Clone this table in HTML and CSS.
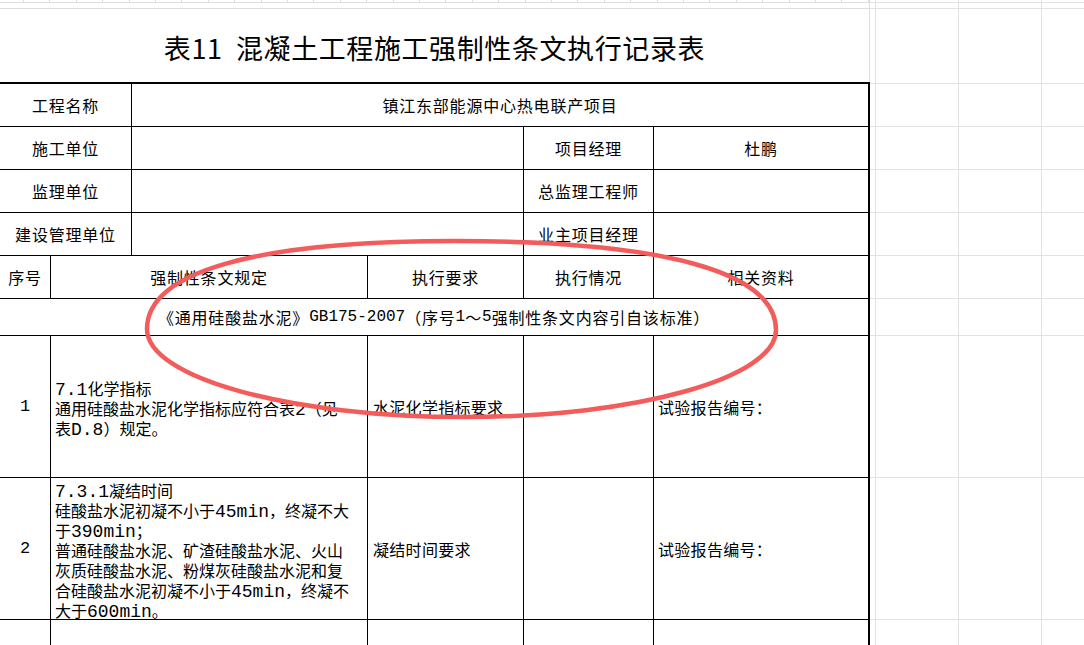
FILE: index.html
```html
<!DOCTYPE html>
<html lang="zh-CN">
<head>
<meta charset="utf-8">
<title>表11 混凝土工程施工强制性条文执行记录表</title>
<link rel="stylesheet" href="styles.css">
</head>
<body>
<div class="sheet">
  <div class="main">
    <div class="ruler"></div>
    <div class="spacer"></div>
    <h1 class="title">表11&nbsp; 混凝土工程施工强制性条文执行记录表</h1>
    <div class="form">
      <div class="c s2">工程名称</div>
      <div class="c s4">镇江东部能源中心热电联产项目</div>

      <div class="c s2">施工单位</div>
      <div class="c s2"></div>
      <div class="c">项目经理</div>
      <div class="c">杜鹏</div>

      <div class="c s2">监理单位</div>
      <div class="c s2"></div>
      <div class="c">总监理工程师</div>
      <div class="c"></div>

      <div class="c s2">建设管理单位</div>
      <div class="c s2"></div>
      <div class="c">业主项目经理</div>
      <div class="c"></div>

      <div class="c">序号</div>
      <div class="c s2">强制性条文规定</div>
      <div class="c">执行要求</div>
      <div class="c">执行情况</div>
      <div class="c">相关资料</div>

      <div class="c s6 std">《通用硅酸盐水泥》<span class="lat">GB175-2007</span>（序号<span class="lat">1</span>～<span class="lat">5</span>强制性条文内容引自该标准）</div>

      <div class="c"><span class="lat num">1</span></div>
      <div class="c s2 para"><div><span class="lat">7.1</span>化学指标<br>通用硅酸盐水泥化学指标应符合表<span class="lat">2</span>（见<br>表<span class="lat">D.8</span>）规定。</div></div>
      <div class="c req">水泥化学指标要求</div>
      <div class="c"></div>
      <div class="c doc">试验报告编号：</div>

      <div class="c"><span class="lat num">2</span></div>
      <div class="c s2 para"><div><span class="lat">7.3.1</span>凝结时间<br>硅酸盐水泥初凝不小于<span class="lat">45min</span>，终凝不大<br>于<span class="lat">390min</span>；<br>普通硅酸盐水泥、矿渣硅酸盐水泥、火山<br>灰质硅酸盐水泥、粉煤灰硅酸盐水泥和复<br>合硅酸盐水泥初凝不小于<span class="lat">45min</span>，终凝不<br>大于<span class="lat">600min</span>。</div></div>
      <div class="c req">凝结时间要求</div>
      <div class="c"></div>
      <div class="c doc">试验报告编号：</div>

      <div class="c"></div>
      <div class="c s2"></div>
      <div class="c"></div>
      <div class="c"></div>
      <div class="c"></div>
    </div>
  </div>
  <div class="side">
    <div></div><div></div><div></div><div></div>
    <div></div><div></div><div></div><div></div>
    <div></div><div></div><div></div><div></div>
    <div></div><div></div><div></div><div></div>
    <div></div><div></div><div></div><div></div>
    <div></div><div></div><div></div><div></div>
    <div></div><div></div><div></div><div></div>
    <div></div><div></div><div></div><div></div>
    <div></div><div></div><div></div><div></div>
    <div></div><div></div><div></div><div></div>
    <div></div><div></div><div></div><div></div>
    <div></div><div></div><div></div><div></div>
  </div>
  <svg class="mark" width="1084" height="645" viewBox="0 0 1084 645" aria-hidden="true">
    <path d="M147 329 C147 272 255 241 455 241 C664 241 776 272 776 330 C776 378 636 417 465 417 C290 417 147 378 147 329 Z" fill="none" stroke="#f45b5b" stroke-width="4.5"/>
  </svg>
</div>
</body>
</html>
```

FILE: styles.css
```css
* { box-sizing: border-box; }
html, body { margin: 0; padding: 0; }
body {
  background: #fff;
  color: #000;
  font-family: "Noto Sans CJK SC", "Noto Sans", sans-serif;
  font-size: 16px;
  overflow: hidden;
}
.sheet {
  position: relative;
  display: flex;
  width: 1084px;
  height: 645px;
  overflow: hidden;
}
.main {
  width: 870px;
  flex: none;
}
.ruler {
  height: 3px;
  border-bottom: 1px solid #dedede;
  border-right: 1px solid #dedede;
  background-image: repeating-linear-gradient(90deg, #dcdcdc 0, #dcdcdc 1px, transparent 1px, transparent 26.4px);
  background-position: 23px 0;
  background-clip: content-box;
}
.spacer {
  height: 6px;
  border-bottom: 1px solid #dedede;
  border-right: 1px solid #dedede;
}
.title {
  margin: 0;
  height: 73px;
  padding-top: 3px;
  border-right: 1px solid #dedede;
  display: flex;
  align-items: center;
  justify-content: center;
  font-size: 27px;
  font-weight: 400;
  letter-spacing: 0.6px;
  white-space: nowrap;
}
.form {
  display: grid;
  grid-template-columns: 50px 80px 235px 155px 129px 214px;
  grid-template-rows: 42px 42px 42px 42px 42px 36px 141px 141px 141px;
  gap: 1px;
  padding: 2px 2px 0 0;
  background: #000;
}
.c {
  background: #fff;
  display: flex;
  align-items: center;
  justify-content: center;
  white-space: nowrap;
  letter-spacing: 0.8px;
  overflow: hidden;
}
.s2 { grid-column: span 2; }
.s4 { grid-column: span 4; }
.s6 { grid-column: span 6; }
.std { letter-spacing: 0.8px; }
.lat {
  font-family: "Liberation Mono", monospace;
  font-size: 16px;
  letter-spacing: 0;
  line-height: 15px;
}
.num { font-size: 17px; }
.para {
  justify-content: flex-start;
  padding: 2px 0 0 4px;
  line-height: 20px;
  letter-spacing: 0;
  overflow: visible;
}
.para .lat { font-size: 18px; }
.req {
  justify-content: flex-start;
  padding-left: 5px;
  letter-spacing: 0.3px;
}
.doc {
  justify-content: flex-start;
  padding-left: 4px;
  letter-spacing: 0.3px;
}
.side {
  flex: 1;
  display: grid;
  grid-template-columns: 5px 82px 82px 1fr;
  grid-template-rows: 2px 5px 74px 42px 42px 42px 42px 42px 36px 141px 141px 141px;
  gap: 1px;
  background: #e2e2e2;
}
.side div { background: #fff; }
.mark {
  position: absolute;
  left: 0;
  top: 0;
  pointer-events: none;
}
```
